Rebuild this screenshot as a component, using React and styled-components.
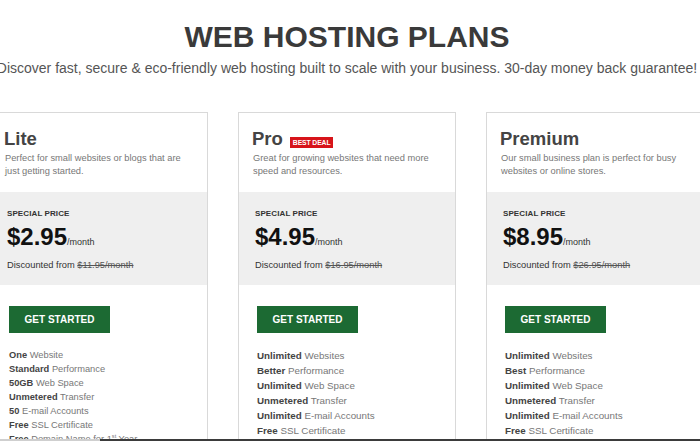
import React from "react";
import styled, { createGlobalStyle } from "styled-components";

const GlobalStyle = createGlobalStyle`
  html, body {
    margin: 0;
    padding: 0;
    overflow: hidden;
    background: #fff;
    font-family: "Liberation Sans", Arial, sans-serif;
  }
`;

const Page = styled.div`
  width: 700px;
  height: 441px;
  overflow: hidden;
`;

const Header = styled.header`
  display: flex;
  flex-direction: column;
  align-items: center;
  margin-left: -6px;
  width: 706px;
  padding-top: 19px;
`;

const Title = styled.h1`
  margin: 0;
  font-size: 30px;
  line-height: 36px;
  font-weight: 700;
  color: #3a3a3a;
  white-space: nowrap;
`;

const Subtitle = styled.p`
  margin: 5px 0 0;
  font-size: 14px;
  line-height: 16px;
  color: #555;
  white-space: nowrap;
`;

const Plans = styled.div`
  display: flex;
  gap: 30px;
  width: 714px;
  margin: 36px 0 0 -10px;
`;

const Card = styled.section`
  flex: 0 0 218px;
  box-sizing: border-box;
  border: 1px solid #d9d9d9;
  border-bottom: none;
  height: 340px;
  background: #fff;
`;

const CardHead = styled.div`
  padding: 15px 14px 14px 13px;
`;

const NameRow = styled.div`
  display: flex;
  align-items: flex-start;
`;

const PlanName = styled.h2`
  margin: 0;
  font-size: 18.5px;
  line-height: 22px;
  font-weight: 700;
  color: #444;
`;

const Badge = styled.span`
  margin: 9px 0 0 7px;
  padding: 0 3px;
  height: 11px;
  line-height: 11px;
  font-size: 6.8px;
  font-weight: 700;
  color: #fff;
  background: #d7141a;
  letter-spacing: -0.1px;
`;

const Description = styled.p`
  margin: 2px 0 0 1px;
  font-size: 9.3px;
  line-height: 13px;
  color: #777;
`;

const PriceBand = styled.div`
  background: #efefef;
  padding: 17px 16px 14px;
`;

const PriceLabel = styled.div`
  font-size: 8px;
  line-height: 10px;
  font-weight: 700;
  color: #333;
  letter-spacing: 0.1px;
`;

const Price = styled.div`
  margin: 4px 0 3px;
  font-size: 24px;
  line-height: 28px;
  font-weight: 700;
  color: #111;
`;

const PerMonth = styled.span`
  font-size: 9px;
  font-weight: 400;
  color: #333;
`;

const Discount = styled.div`
  font-size: 9.3px;
  line-height: 12px;
  color: #333;

  s {
    color: #555;
  }
`;

const CardBody = styled.div`
  padding: 21px 18px 0;
`;

const Button = styled.button`
  display: block;
  width: 101px;
  height: 27px;
  padding: 0;
  border: none;
  background: #1c6a33;
  color: #fff;
  font-family: inherit;
  font-size: 10px;
  font-weight: 700;
  cursor: pointer;
`;

const Features = styled.ul`
  list-style: none;
  margin: 15px 0 0;
  padding: 0;
  font-size: ${(p) => p.$size}px;
  line-height: ${(p) => p.$line}px;
  color: #777;
  white-space: nowrap;

  b {
    color: #444;
  }

  sup {
    font-size: 60%;
    line-height: 0;
  }
`;

const BottomEdge = styled.div`
  position: fixed;
  left: 0;
  right: 0;
  bottom: 0;
  height: 2px;
  background: linear-gradient(to right, #cfcfcf 0 100px, #3b3b3b 100px);
`;

const plans = [
  {
    name: "Lite",
    desc: "Perfect for small websites or blogs that are just getting started.",
    price: "$2.95",
    was: "$11.95/month",
    size: 9.3,
    line: 14,
    features: [
      ["One", "Website"],
      ["Standard", "Performance"],
      ["50GB", "Web Space"],
      ["Unmetered", "Transfer"],
      ["50", "E-mail Accounts"],
      ["Free", "SSL Certificate"],
      ["Free", <>Domain Name for 1<sup>st</sup> Year</>],
    ],
  },
  {
    name: "Pro",
    badge: "BEST DEAL",
    desc: "Great for growing websites that need more speed and resources.",
    price: "$4.95",
    was: "$16.95/month",
    size: 9.8,
    line: 15,
    features: [
      ["Unlimited", "Websites"],
      ["Better", "Performance"],
      ["Unlimited", "Web Space"],
      ["Unmetered", "Transfer"],
      ["Unlimited", "E-mail Accounts"],
      ["Free", "SSL Certificate"],
      ["Free", "Domain Name"],
    ],
  },
  {
    name: "Premium",
    desc: "Our small business plan is perfect for busy websites or online stores.",
    price: "$8.95",
    was: "$26.95/month",
    size: 9.8,
    line: 15,
    features: [
      ["Unlimited", "Websites"],
      ["Best", "Performance"],
      ["Unlimited", "Web Space"],
      ["Unmetered", "Transfer"],
      ["Unlimited", "E-mail Accounts"],
      ["Free", "SSL Certificate"],
      ["Free", "Domain Name"],
    ],
  },
];

const App = () => {
  return (
    <Page>
      <GlobalStyle />
      <Header>
        <Title>WEB HOSTING PLANS</Title>
        <Subtitle>
          Discover fast, secure &amp; eco-friendly web hosting built to scale with your business. 30-day money back guarantee!
        </Subtitle>
      </Header>

      <Plans>
        {plans.map((plan) => (
          <Card key={plan.name}>
            <CardHead>
              <NameRow>
                <PlanName>{plan.name}</PlanName>
                {plan.badge && <Badge>{plan.badge}</Badge>}
              </NameRow>
              <Description>{plan.desc}</Description>
            </CardHead>

            <PriceBand>
              <PriceLabel>SPECIAL PRICE</PriceLabel>
              <Price>
                {plan.price}
                <PerMonth>/month</PerMonth>
              </Price>
              <Discount>
                Discounted from <s>{plan.was}</s>
              </Discount>
            </PriceBand>

            <CardBody>
              <Button>GET STARTED</Button>
              <Features $size={plan.size} $line={plan.line}>
                {plan.features.map(([strong, rest], i) => (
                  <li key={i}>
                    <b>{strong}</b> {rest}
                  </li>
                ))}
              </Features>
            </CardBody>
          </Card>
        ))}
      </Plans>
      <BottomEdge />
    </Page>
  );
};

export default App;
